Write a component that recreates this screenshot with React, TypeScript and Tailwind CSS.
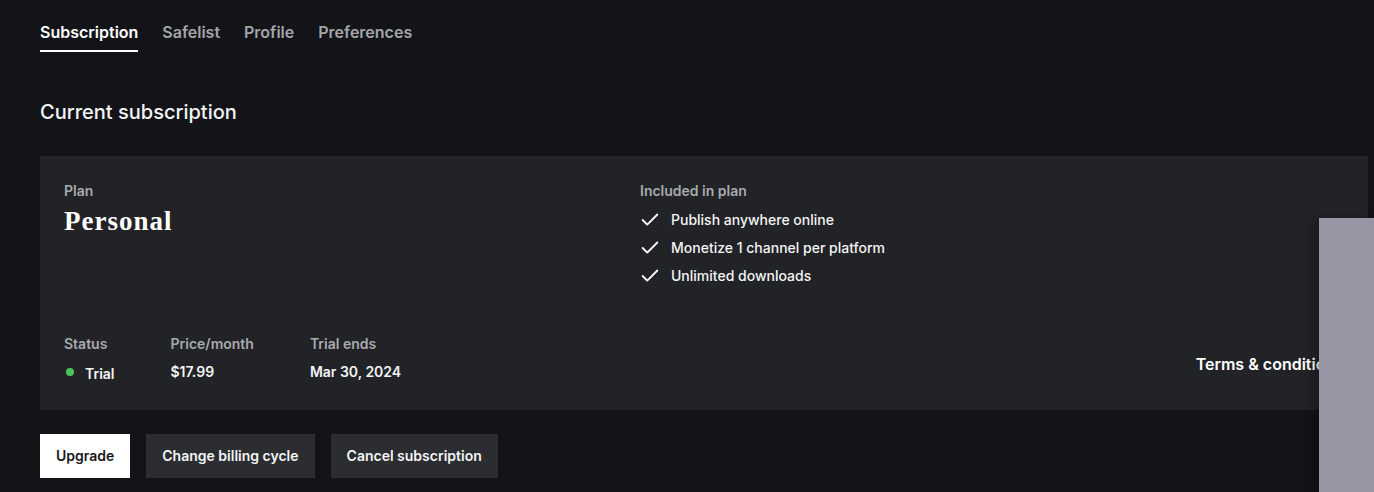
import { Check } from "lucide-react"

const tabs = ["Subscription", "Safelist", "Profile", "Preferences"]

const features = [
  "Publish anywhere online",
  "Monetize 1 channel per platform",
  "Unlimited downloads",
]

function Stat({ label, children }: { label: string; children: React.ReactNode }) {
  return (
    <div className="flex flex-col gap-2">
      <div className="text-sm leading-5 font-semibold text-[#a9a9ae]">{label}</div>
      <div className="text-sm leading-5 font-semibold text-[#f4f4f5]">{children}</div>
    </div>
  )
}

export default function App() {
  return (
    <div
      className="relative h-[492px] w-[1374px] overflow-hidden bg-[#131418] pl-10 pr-[6px] pt-5 text-white"
      style={{ fontFamily: "Inter, 'Noto Sans', sans-serif" }}
    >
      <nav className="flex gap-6">
        {tabs.map((t, i) => (
          <div
            key={t}
            className={
              i === 0
                ? "border-b-2 border-white pb-[6px] text-base leading-6 font-semibold text-white"
                : "pb-[6px] text-base leading-6 font-semibold text-[#a4a4a9]"
            }
          >
            {t}
          </div>
        ))}
      </nav>

      <h2 className="mt-[46px] text-xl leading-7 font-medium text-[#f4f4f5]">Current subscription</h2>

      <div className="mt-[30px] flex h-[254px] w-[1328px] flex-col bg-[#222327] px-6 pt-[25px]">
        <div className="flex">
          <div className="w-[576px]">
            <div className="text-sm leading-5 font-semibold text-[#a9a9ae]">Plan</div>
            <div
              className="mt-1 text-[27px] leading-8 font-bold tracking-[1px] text-white"
              style={{ fontFamily: "'Liberation Serif', serif" }}
            >
              Personal
            </div>
          </div>
          <div>
            <div className="text-sm leading-5 font-semibold text-[#a9a9ae]">Included in plan</div>
            <ul className="mt-[5px]">
              {features.map((f) => (
                <li key={f} className="flex h-7 items-center gap-[10px] text-sm font-medium text-[#f4f4f5]">
                  <Check size={22} strokeWidth={2} className="-ml-[1px] text-white" />
                  {f}
                </li>
              ))}
            </ul>
          </div>
        </div>

        <div className="mt-[44px] flex items-center justify-between">
          <div className="flex gap-[56px]">
            <Stat label="Status">
              <span className="flex items-center gap-[11px] pl-[2px]">
                <span className="h-2 w-2 rounded-full bg-[#4cc35a]" />
                <span className="translate-y-[2px]">Trial</span>
              </span>
            </Stat>
            <Stat label="Price/month">$17.99</Stat>
            <Stat label="Trial ends">Mar 30, 2024</Stat>
          </div>
          <div className="translate-y-[6px] text-base font-semibold text-white">Terms &amp; conditions</div>
        </div>
      </div>

      <div className="mt-6 flex gap-4">
        <button className="h-11 bg-white px-4 text-sm font-semibold text-[#17181c]">Upgrade</button>
        <button className="h-11 bg-[#2b2d31] px-4 text-sm font-semibold text-[#f4f4f5]">Change billing cycle</button>
        <button className="h-11 bg-[#2b2d31] px-4 text-sm font-semibold text-[#f4f4f5]">Cancel subscription</button>
      </div>

      <div className="absolute left-[1319px] top-[218px] h-[274px] w-[55px] bg-[#9895a4] shadow-[-6px_0_10px_rgba(0,0,0,0.25)]" />
    </div>
  )
}
